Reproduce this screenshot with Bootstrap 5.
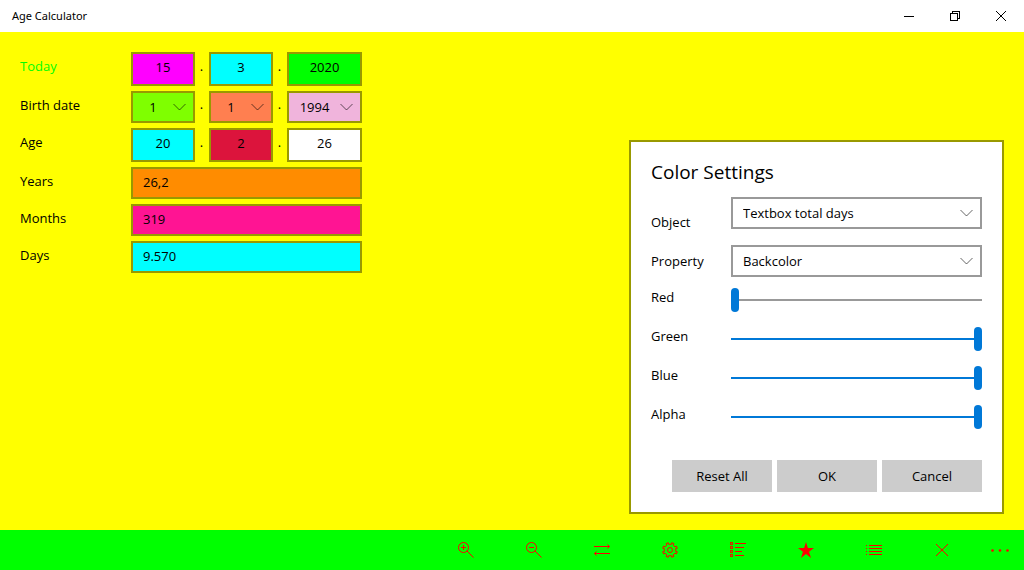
<!DOCTYPE html>
<html lang="en">
<head>
<meta charset="utf-8">
<meta name="viewport" content="width=device-width, initial-scale=1">
<title>Age Calculator</title>
<link href="https://cdn.jsdelivr.net/npm/bootstrap@5.3.0/dist/css/bootstrap.min.css" rel="stylesheet">
<style>
  :root { --edge: #999900; --accent: #0078d7; }
  body { font: 14px/20px "Open Sans", "Noto Sans", sans-serif; color: #000; background: #ffff00; }
  .title-bar { height: 32px; background: #fff; font-family: "Noto Sans", sans-serif; font-size: 11px; }
  .win-btn { width: 46px; height: 32px; }
  .plain-btn { border: 0; background: transparent; padding: 0; color: inherit; }
  svg { display: block; }

  /* Age form */
  .age-form { display: grid; grid-template-columns: 111px 64px 14px 64px 14px 75px; row-gap: 5px; align-content: start; padding: 20px 0 20px 20px; font-size: 13px; }
  .age-form label { align-self: center; padding-bottom: 4px; }
  .age-form .row-label { align-self: center; padding-bottom: 6px; }
  .dot { align-self: center; text-align: center; padding: 0 1px 6px 0; }
  .span-all { grid-column: 2 / -1; }
  .field { width: 100%; min-width: 0; height: 32px; border: 2px solid var(--edge); border-radius: 0; padding: 0 10px 2px; font-size: 13px; line-height: 20px; color: #000; }
  .field-tall { height: 34px; padding: 0 0 4px; text-align: center; }
  .pick {
    appearance: none; height: 32px; border: 2px solid var(--edge); border-radius: 0; color: #000;
    font-size: 13px; line-height: 20px; padding: 0 20px 0 0; text-align: center; text-align-last: center; width: 100%; min-width: 0;
    background-image: url("data:image/svg+xml,%3Csvg xmlns='http://www.w3.org/2000/svg' width='13' height='8' viewBox='0 0 13 8'%3E%3Cpath d='M.5 1l6 6 6-6' fill='none' stroke='%23000' stroke-opacity='.6'/%3E%3C/svg%3E");
    background-repeat: no-repeat; background-position: right 7px center; background-size: 13px 8px;
  }
  .pick-wide { border-color: #999; background-color: #fff; padding: 0 30px 0 10px; text-align: left; text-align-last: left; }

  /* Colour dialog */
  .color-panel { width: 375px; max-width: 100%; margin: 0 20px 16px auto; background: #fff; border: 2px solid var(--edge); padding: 15px 20px 20px; font-size: 13px; }
  .color-panel h1 { font-size: 19px; line-height: 30px; font-weight: 400; margin: 0 0 10px; }
  .opt-row { display: grid; grid-template-columns: 80px 1fr; }
  .opt-row label { align-self: center; }
  .row-object { height: 48px; }
  .row-object label { padding-top: 2px; }
  .row-property { margin-bottom: 3px; }
  .row-slider { height: 39px; align-items: center; }
  .row-slider label { padding-bottom: 6px; }
  .slide { appearance: none; width: 100%; height: 24px; margin: 0; background: transparent; display: block; }
  .slide::-webkit-slider-runnable-track { height: 2px; background: linear-gradient(to right, var(--accent) var(--fill), #999 var(--fill)); }
  .slide::-webkit-slider-thumb { appearance: none; width: 8px; height: 24px; margin-top: -11px; border-radius: 4px; background: var(--accent); }
  .slide::-moz-range-track { height: 2px; background: #999; }
  .slide::-moz-range-progress { height: 2px; background: var(--accent); }
  .slide::-moz-range-thumb { width: 8px; height: 24px; border: 0; border-radius: 4px; background: var(--accent); }
  .dlg-actions { gap: 5px; margin-top: 24px; }
  .dlg-btn { width: 100px; height: 32px; border: 0; padding: 0; background: #ccc; color: #000; }

  /* Command bar */
  .cmd-bar { min-height: 40px; background: #00ff00; color: #ff0000; }
  .cmd { width: 68px; height: 40px; }
  .cmd-more { width: 48px; }
</style>
</head>
<body class="d-flex flex-column min-vh-100">

<header class="title-bar d-flex align-items-center">
  <span class="ps-2 ms-1 flex-grow-1">Age Calculator</span>
  <button type="button" class="plain-btn win-btn d-flex align-items-center justify-content-center" aria-label="Minimize">
    <svg width="10" height="10" viewBox="0 0 10 10" shape-rendering="crispEdges"><path d="M0 5h10v1H0z"/></svg>
  </button>
  <button type="button" class="plain-btn win-btn d-flex align-items-center justify-content-center" aria-label="Restore">
    <svg width="10" height="10" viewBox="0 0 10 10" fill="none" stroke="#000" shape-rendering="crispEdges"><path d="M.5 2.500h7v7h-7zM2.500 2V.5h7v7H8"/></svg>
  </button>
  <button type="button" class="plain-btn win-btn d-flex align-items-center justify-content-center" aria-label="Close">
    <svg width="10" height="10" viewBox="0 0 10 10" fill="none" stroke="#000"><path d="M0 0l10 10M10 0L0 10"/></svg>
  </button>
</header>

<main class="flex-grow-1 d-flex flex-wrap justify-content-between">
  <form class="age-form">
    <span class="row-label" style="color:#00ff00">Today</span>
    <input class="field field-tall" style="background:#ff00ff" value="15" aria-label="Today, day" readonly>
    <span class="dot">.</span>
    <input class="field field-tall" style="background:#00ffff" value="3" aria-label="Today, month" readonly>
    <span class="dot">.</span>
    <input class="field field-tall" style="background:#00ff00" value="2020" aria-label="Today, year" readonly>

    <label for="bday">Birth date</label>
    <select id="bday" class="pick" style="background-color:#7fff00"><option>1</option></select>
    <span class="dot">.</span>
    <select class="pick" style="background-color:#ff7f50" aria-label="Birth month"><option>1</option></select>
    <span class="dot">.</span>
    <select class="pick" style="background-color:#f0b4dc" aria-label="Birth year"><option>1994</option></select>

    <span class="row-label">Age</span>
    <input class="field field-tall" style="background:#00ffff" value="20" aria-label="Age, days" readonly>
    <span class="dot">.</span>
    <input class="field field-tall" style="background:#dc143c" value="2" aria-label="Age, months" readonly>
    <span class="dot">.</span>
    <input class="field field-tall" style="background:#ffffff" value="26" aria-label="Age, years" readonly>

    <label for="years">Years</label>
    <input id="years" class="field span-all" style="background:#ff8c00" value="26,2" readonly>
    <label for="months">Months</label>
    <input id="months" class="field span-all" style="background:#ff1493" value="319" readonly>
    <label for="days">Days</label>
    <input id="days" class="field span-all" style="background:#00ffff" value="9.570" readonly>
  </form>

  <section class="color-panel align-self-end" aria-labelledby="dlg-title">
    <h1 id="dlg-title">Color Settings</h1>
    <div class="opt-row row-object">
      <label for="obj">Object</label>
      <select id="obj" class="pick pick-wide"><option>Textbox total days</option></select>
    </div>
    <div class="opt-row row-property">
      <label for="prop">Property</label>
      <select id="prop" class="pick pick-wide"><option>Backcolor</option></select>
    </div>
    <div class="opt-row row-slider"><label for="red">Red</label><input id="red" class="slide" type="range" min="0" max="255" value="0" style="--fill:0%"></div>
    <div class="opt-row row-slider"><label for="green">Green</label><input id="green" class="slide" type="range" min="0" max="255" value="255" style="--fill:100%"></div>
    <div class="opt-row row-slider"><label for="blue">Blue</label><input id="blue" class="slide" type="range" min="0" max="255" value="255" style="--fill:100%"></div>
    <div class="opt-row row-slider"><label for="alpha">Alpha</label><input id="alpha" class="slide" type="range" min="0" max="255" value="255" style="--fill:100%"></div>
    <div class="dlg-actions d-flex justify-content-end">
      <button type="button" class="dlg-btn">Reset All</button>
      <button type="button" class="dlg-btn">OK</button>
      <button type="button" class="dlg-btn">Cancel</button>
    </div>
  </section>
</main>

<footer class="cmd-bar d-flex flex-wrap justify-content-end">
  <button type="button" class="plain-btn cmd d-flex align-items-center justify-content-center" aria-label="Zoom in">
    <svg width="16" height="16" viewBox="0 0 16 16" fill="none" stroke="currentColor"><circle cx="5.500" cy="5.500" r="5"/><path d="M9 9l6.500 6.500M3 5.500h5M5.500 3v5"/></svg>
  </button>
  <button type="button" class="plain-btn cmd d-flex align-items-center justify-content-center" aria-label="Zoom out">
    <svg width="16" height="16" viewBox="0 0 16 16" fill="none" stroke="currentColor"><circle cx="5.500" cy="5.500" r="5"/><path d="M9 9l6.500 6.500M3 5.500h5"/></svg>
  </button>
  <button type="button" class="plain-btn cmd d-flex align-items-center justify-content-center" aria-label="Switch">
    <svg width="16" height="16" viewBox="0 0 16 16" fill="none" stroke="currentColor"><path d="M0 4.500h15.500M13.500 2.500l2 2-2 2M16 11.500H.5M2.500 9.500l-2 2 2 2"/></svg>
  </button>
  <button type="button" class="plain-btn cmd d-flex align-items-center justify-content-center" aria-label="Settings">
    <svg width="16" height="16" viewBox="0 0 16 16" fill="none" stroke="currentColor" stroke-linejoin="round"><circle cx="8" cy="8" r="2.500"/><path d="M6.600 2.300L6.200.7 4.100 1.600 4.900 3 3 4.900 1.600 4.100.7 6.200l1.600.4v2.800L.7 9.800l.9 2.100L3 11.100 4.900 13l-.8 1.400 2.100.9.4-1.600h2.800l.4 1.600 2.100-.9-.8-1.400 1.900-1.900 1.400.8.9-2.100-1.600-.4V6.600l1.600-.4-.9-2.100-1.400.8L11.100 3l.8-1.400L9.800.7l-.4 1.600z"/></svg>
  </button>
  <button type="button" class="plain-btn cmd d-flex align-items-center justify-content-center" aria-label="List options">
    <svg width="16" height="16" viewBox="0 0 16 16" fill="none" stroke="currentColor"><path d="M.5.5h2v2h-2zM.5 4.500h2v2h-2zM.5 8.500h2v2h-2zM.5 12.500h2v2h-2zM5 1.500h11M5 5.500h9M5 9.500h7M5 13.500h9"/></svg>
  </button>
  <button type="button" class="plain-btn cmd d-flex align-items-center justify-content-center" aria-label="Rate">
    <svg width="16" height="16" viewBox="0 0 16 16" fill="currentColor"><path d="M8 0l1.900 6H16l-4.900 3.700L13 16l-5-3.900L3 16l1.900-6.300L0 6h6.100z"/></svg>
  </button>
  <button type="button" class="plain-btn cmd d-flex align-items-center justify-content-center" aria-label="List">
    <svg width="16" height="16" viewBox="0 0 16 16" fill="none" stroke="currentColor"><path d="M0 3.500h1M3 3.500h13M0 6.500h1M3 6.500h13M0 9.500h1M3 9.500h13M0 12.500h1M3 12.500h13"/></svg>
  </button>
  <button type="button" class="plain-btn cmd d-flex align-items-center justify-content-center" aria-label="Cancel">
    <svg width="12" height="12" viewBox="0 0 12 12" fill="none" stroke="currentColor"><path d="M0 0l12 12M12 0L0 12"/></svg>
  </button>
  <button type="button" class="plain-btn cmd cmd-more d-flex align-items-center justify-content-center" aria-label="More">
    <svg width="18" height="4" viewBox="0 0 18 4" fill="currentColor"><circle cx="1.500" cy="2.500" r="1.300"/><circle cx="9" cy="2.500" r="1.300"/><circle cx="16.500" cy="2.500" r="1.300"/></svg>
  </button>
</footer>

<script src="https://cdn.jsdelivr.net/npm/bootstrap@5.3.0/dist/js/bootstrap.bundle.min.js"></script>
</body>
</html>
